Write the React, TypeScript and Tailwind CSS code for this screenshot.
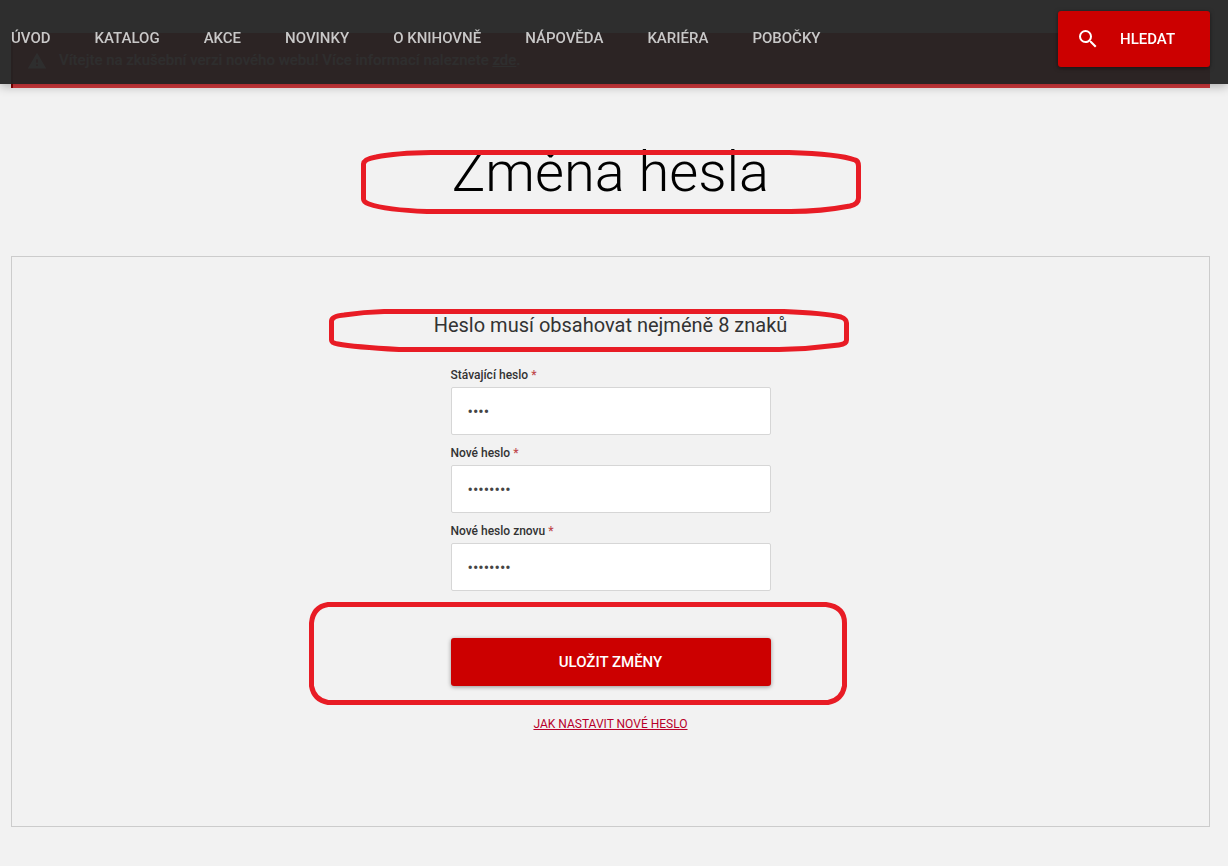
import type { ReactNode } from 'react';
import { MdSearch, MdWarning } from 'react-icons/md';

const NAV_ITEMS = ['Úvod', 'Katalog', 'Akce', 'Novinky', 'O knihovně', 'Nápověda', 'Kariéra', 'Pobočky'];

const FIELDS = [
  { id: 'current-password', label: 'Stávající heslo', value: '1234', autoComplete: 'current-password' },
  { id: 'new-password', label: 'Nové heslo', value: '12345678', autoComplete: 'new-password' },
  { id: 'new-password-again', label: 'Nové heslo znovu', value: '12345678', autoComplete: 'new-password' },
];

// hand drawn marker around a part of the page
function Marker({ d, className, viewBox }: { d: string; className: string; viewBox: string }) {
  return (
    <svg
      aria-hidden="true"
      viewBox={viewBox}
      className={`pointer-events-none absolute max-w-none ${className}`}
      fill="none"
      stroke="#e81c25"
      strokeWidth="5"
    >
      <path d={d} />
    </svg>
  );
}

function Header() {
  return (
    <header className="fixed inset-x-0 top-0 z-10 flex h-[84px] items-start justify-between bg-[#232323]/95 pr-[18px] pl-[11px] shadow-[0_2px_10px_rgba(0,0,0,0.3)]">
      <nav className="flex gap-11 pt-7">
        {NAV_ITEMS.map((item) => (
          <a key={item} href="#" className="text-[15px] leading-5 font-medium text-[#c8c8c8] uppercase">
            {item}
          </a>
        ))}
      </nav>
      <button
        type="button"
        className="mt-[11px] flex h-14 w-[152px] items-center rounded-[3px] bg-[#cc0000] pl-[18px] text-[15px] font-medium text-white uppercase shadow-[0_1px_4px_rgba(0,0,0,0.5)]"
      >
        <MdSearch className="mr-5 size-6" />
        Hledat
      </button>
    </header>
  );
}

function Alert() {
  return (
    <div className="mt-[33px] flex h-[55px] items-center gap-3 border-l-2 border-[#880000] bg-[#d63a3e] px-[14px] text-[15px] font-medium text-white">
      <MdWarning className="size-5" />
      <p>
        Vítejte na zkušební verzi nového webu! Více informací naleznete{' '}
        <a href="#" className="underline">
          zde
        </a>
        .
      </p>
    </div>
  );
}

function Field({ id, label, value, autoComplete }: (typeof FIELDS)[number]) {
  return (
    <div className="flex flex-col gap-1 pb-[10px]">
      <label htmlFor={id} className="text-xs leading-4 font-medium text-[#333333]">
        {label} <span className="text-[#c0494d]">*</span>
      </label>
      <input
        id={id}
        type="password"
        defaultValue={value}
        autoComplete={autoComplete}
        className="h-12 w-full rounded-xs border border-[#d6d6d6] bg-white px-4 text-base text-[#444444] outline-none"
      />
    </div>
  );
}

function Panel({ children }: { children: ReactNode }) {
  return <section className="border border-[#cccccc] pt-[52px] pb-[92px]">{children}</section>;
}

export default function App() {
  return (
    <div className="min-h-screen bg-[#f2f2f2] font-[Roboto,'Liberation_Sans',sans-serif]">
      <Header />
      <main className="flow-root pr-[18px] pb-10 pl-[11px]">
        <Alert />
        <div className="relative mt-[50px] mb-[50px]">
          <h1 className="text-center text-[56px] leading-[68px] font-light text-black">Změna hesla</h1>
          <Marker
            viewBox="0 0 500 64"
            className="top-3 left-1/2 h-16 w-[500px] -translate-x-1/2"
            d="M70 2.5H428Q478 4 494 10Q497.500 11 497.500 16V48Q497.500 54 489 56Q460 61.500 430 61.500H66Q25 60 8 54Q2.500 52 2.500 49V14Q3 9 15 7Q35 3 70 2.500Z"
          />
        </div>
        <Panel>
          <form className="mx-auto w-80">
            <div className="relative mb-[26px] flex justify-center">
              <p className="text-xl leading-8 whitespace-nowrap text-[#333333]">Heslo musí obsahovat nejméně 8 znaků</p>
              <Marker
                viewBox="0 0 521 43"
                className="top-0 -left-[122px] h-[43px] w-[521px]"
                d="M55 2.500H455Q495 4 512 8Q517.500 10 517.500 14V31Q517.500 35 510 36Q480 40 450 40.500H70Q25 38 9 35Q2.500 34 2.500 31V12Q3 7 15 6Q35 3 55 2.500Z"
              />
            </div>
            {FIELDS.map((field) => (
              <Field key={field.id} {...field} />
            ))}
            <div className="relative mt-[37px] mb-7">
              <button
                type="submit"
                className="h-12 w-full rounded-[3px] bg-[#cc0000] text-[15px] font-medium text-white uppercase shadow-[0_1px_4px_rgba(0,0,0,0.4)]"
              >
                Uložit změny
              </button>
              <Marker
                viewBox="0 0 539 104"
                className="-top-9 -left-[142px] h-[104px] w-[539px]"
                d="M19 2.500H517Q535.500 5 535.500 21V84Q533 98 519 100.500H19Q5 98 2.500 84V21Q4 5 19 2.500Z"
              />
            </div>
            <p className="text-center text-xs leading-5">
              <a href="#" className="text-[#b8002a] uppercase underline">
                Jak nastavit nové heslo
              </a>
            </p>
          </form>
        </Panel>
      </main>
    </div>
  );
}
